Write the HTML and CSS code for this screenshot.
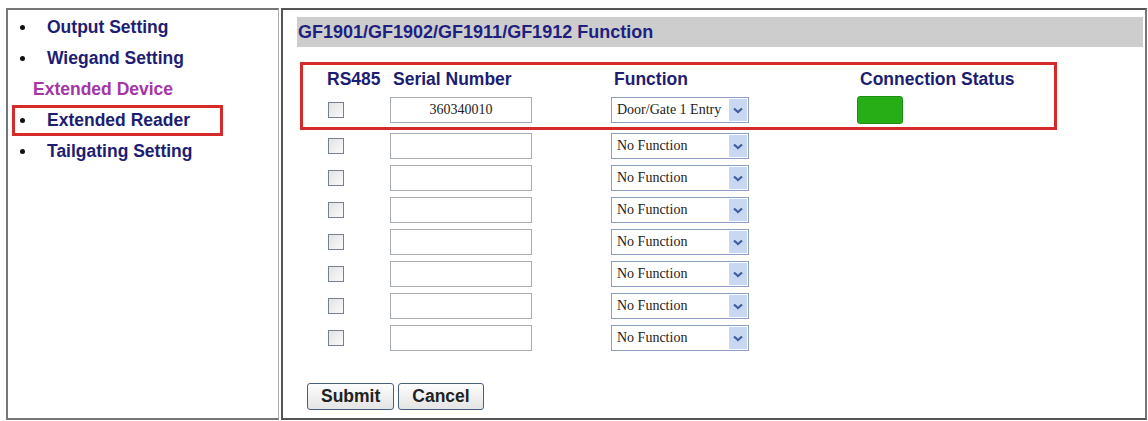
FILE: index.html
```html
<!DOCTYPE html>
<html lang="en">
<head>
    <meta charset="UTF-8">
    <title>Extended Reader</title>
    <link rel="stylesheet" href="styles.css">
</head>
<body>

<div class="frame">
    <ul class="side">
        <li class="nav-item">Output Setting</li>
        <li class="nav-item">Wiegand Setting</li>
        <li class="nav-group">Extended Device</li>
        <li class="nav-item active">Extended Reader</li>
        <li class="nav-item">Tailgating Setting</li>
    </ul>

    <div class="main">
        <div class="title-bar">GF1901/GF1902/GF1911/GF1912 Function</div>

        <div class="marked">
            <div class="row head">
                <span>RS485</span>
                <span>Serial Number</span>
                <span>Function</span>
                <span>Connection Status</span>
            </div>
            <div class="row first">
                <span><input type="checkbox" class="check"></span>
                <span><input type="text" class="serial" value="360340010"></span>
                <span><div class="select"><span>Door/Gate 1 Entry</span><i class="arrow"><svg width="10" height="7" viewBox="0 0 10 7"><path d="M1 1.5 L5 5 L9 1.5" fill="none" stroke="#3e5e9e" stroke-width="2.2"/></svg></i></div></span>
                <span><div class="status"></div></span>
            </div>
        </div>

        <div class="rows" id="rows"></div>

        <div class="buttons">
            <button>Submit</button>
            <button>Cancel</button>
        </div>
    </div>
</div>

<script>
    // remaining reader slots
    const rows = document.getElementById("rows");
    for (let i = 0; i < 7; i++) {
        const row = document.createElement("div");
        row.className = "row";
        row.innerHTML =
            '<span><input type="checkbox" class="check"></span>' +
            '<span><input type="text" class="serial"></span>' +
            '<span><div class="select"><span>No Function</span><i class="arrow"><svg width="10" height="7" viewBox="0 0 10 7"><path d="M1 1.5 L5 5 L9 1.5" fill="none" stroke="#3e5e9e" stroke-width="2.2"/></svg></i></div></span>' +
            '<span></span>';
        rows.appendChild(row);
    }
</script>

</body>
</html>
```

FILE: styles.css
```css
body {
    margin: 0;
    background-color: #fff;
    font-family: "Liberation Sans", Arial, sans-serif;
    font-weight: bold;
    font-size: 17.5px;
    color: #1d1d72;
}

.frame {
    display: flex;
    margin: 8px 1px 0 6px;
    height: 412px;
}

.side {
    list-style: none;
    margin: 0;
    padding: 2px 0 0 0;
    width: 270px;
    border: 2px solid #777;
    border-right: 1px solid #aaa;
}

.nav-item, .nav-group {
    display: flex;
    align-items: center;
    box-sizing: border-box;
    height: 31px;
    width: 211px;
    margin-left: 4px;
    border: 3px solid transparent;
}

.nav-item::before {
    content: "";
    width: 5px;
    height: 5px;
    border-radius: 50%;
    background-color: #111;
    margin: 0 22px 0 5px;
}

.nav-group {
    color: #a436a8;
    padding-left: 18px;
}

.nav-item.active {
    border-color: #d42a2a;
}

.main {
    flex: 1;
    margin-left: 2px;
    border: 2px solid #555;
    border-right-color: #777;
    padding: 7px 2px 0 14px;
}

.title-bar {
    background-color: #cdcdcd;
    height: 30px;
    line-height: 30px;
    padding-left: 1px;
    font-size: 18px;
    color: #1f1f80;
}

.marked {
    margin: 15px 0 0 3px;
    width: 751px;
    border: 3px solid #d42a2a;
}

.row {
    display: grid;
    grid-template-columns: 63px 221px 246px 1fr;
    align-items: center;
    height: 32px;
    padding-left: 24px;
}

.rows .row {
    padding-left: 30px;
}

.row.head {
    height: 28px;
}

.row.head span + span {
    padding-left: 3px;
}

.row.first {
    height: 34px;
}

.check {
    -webkit-appearance: none;
    appearance: none;
    display: block;
    margin: 0 0 0 1px;
    width: 16px;
    height: 16px;
    border: 1px solid #75818e;
    background: linear-gradient(135deg, #e2e2e2, #fafafa);
}

.serial {
    display: block;
    box-sizing: border-box;
    width: 142px;
    height: 26px;
    border: 1px solid #a8adb4;
    background-color: #fff;
    font-family: "Liberation Serif", "Times New Roman", serif;
    font-size: 14px;
    color: #222;
    text-align: center;
    padding: 0;
}

.select {
    display: flex;
    align-items: center;
    justify-content: space-between;
    box-sizing: border-box;
    width: 138px;
    height: 26px;
    border: 1px solid #8aa0bd;
    padding: 0 1px 0 5px;
    font-family: "Liberation Serif", "Times New Roman", serif;
    font-weight: normal;
    font-size: 14px;
    color: #222;
}

.arrow {
    display: flex;
    align-items: center;
    justify-content: center;
    width: 18px;
    height: 22px;
    background-color: #c9d8f2;
}

.status {
    width: 46px;
    height: 28px;
    box-sizing: border-box;
    background-color: #27ad16;
    border: 1px solid #1b8f10;
    border-radius: 3px;
}

.buttons {
    display: flex;
    gap: 4px;
    margin: 29px 0 0 10px;
}

button {
    height: 27px;
    padding: 0 13px;
    font-family: "Liberation Sans", Arial, sans-serif;
    font-weight: bold;
    font-size: 17.5px;
    color: #222;
    background: linear-gradient(#fdfdfd, #e4e4e4);
    border: 1px solid #46607e;
    border-radius: 3px;
}
```
